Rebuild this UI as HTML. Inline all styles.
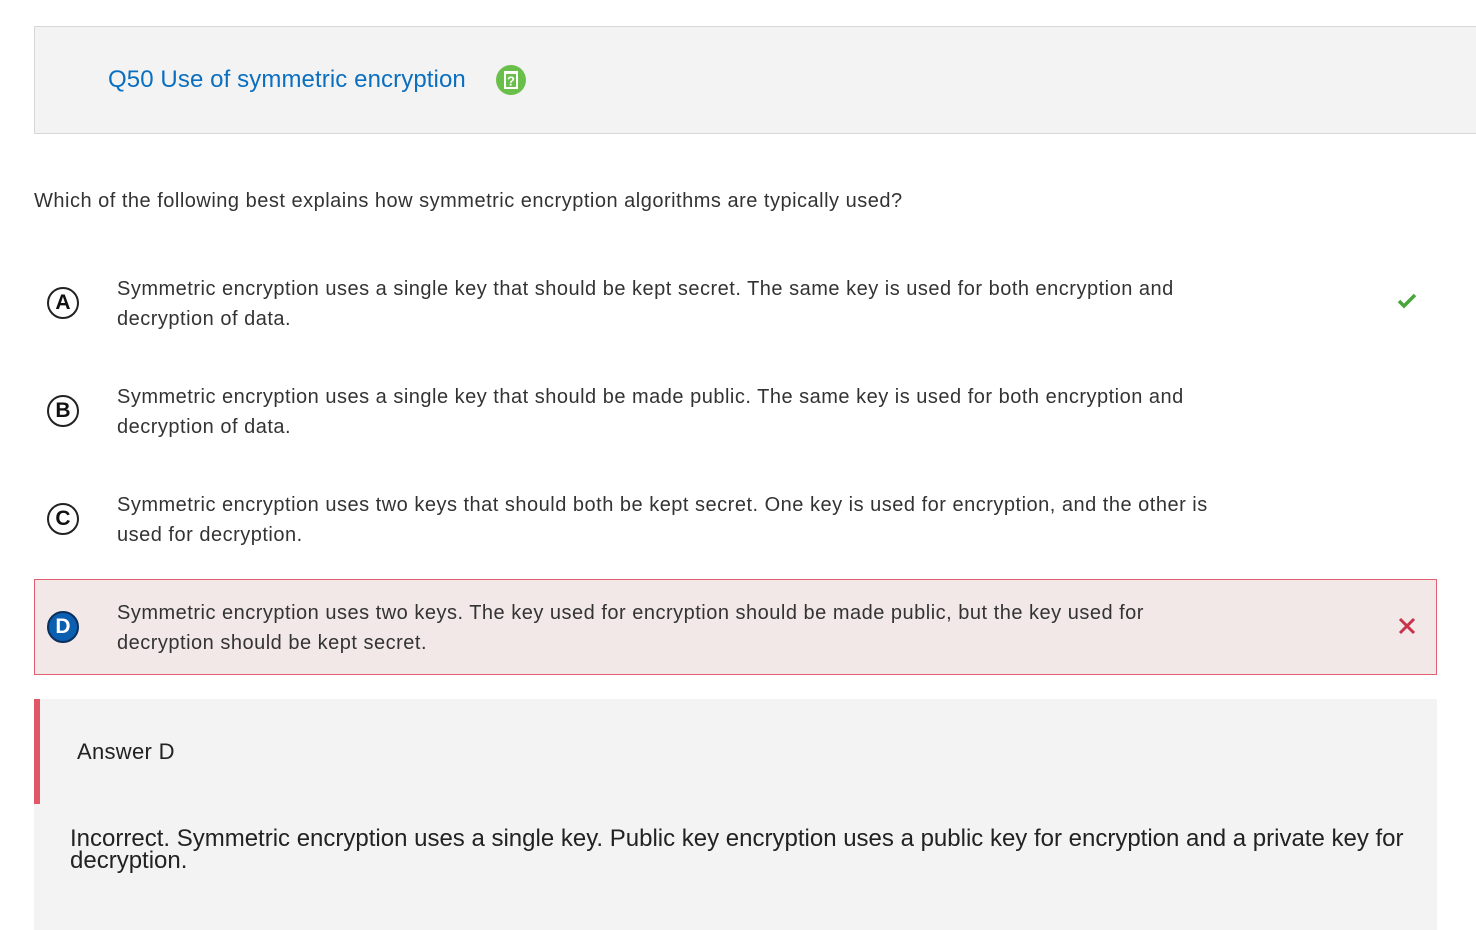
<!DOCTYPE html>
<html><head><meta charset="utf-8"><style>
body{margin:0;background:#fff;font-family:"Liberation Sans",Arial,sans-serif;color:#333;width:1476px;height:930px;overflow:hidden;position:relative}
.hdr{position:absolute;left:34px;top:26px;width:1460px;height:106px;background:#f3f3f3;border:1px solid #d6d6d6}
.title{position:absolute;left:73px;top:39px;font-size:24px;color:#0b6fc0;letter-spacing:0.1px}
.qi{position:absolute;left:461px;top:38px;width:30px;height:30px;border-radius:50%;background:#6abf4b}
.q{position:absolute;left:34px;top:190px;font-size:20px;letter-spacing:0.5px}
.opt{position:absolute;left:117px;font-size:20px;line-height:30px;width:1100px;letter-spacing:0.5px}
.c{position:absolute;left:47px;width:28px;height:28px;border:2px solid #222;border-radius:50%;font-weight:bold;font-size:21px;text-align:center;line-height:28px;color:#111}
.dbox{position:absolute;left:34px;top:579px;width:1401px;height:94px;background:#f2e8e8;border:1px solid #e0606f}
.ans{position:absolute;left:34px;top:699px;width:1403px;height:231px;background:#f3f3f3}
.bar{position:absolute;left:34px;top:699px;width:6px;height:105px;background:#e05767}
</style></head><body>
<div class="hdr"><div class="title">Q50 Use of symmetric encryption</div>
<div class="qi"><svg width="30" height="30" viewBox="0 0 30 30"><rect x="8" y="6" width="14" height="18" fill="#fff"/><rect x="10" y="9" width="10" height="13" fill="#6abf4b"/><text x="15" y="20.5" font-size="13" font-weight="bold" text-anchor="middle" fill="#fff" font-family="Liberation Sans">?</text></svg></div></div>
<div class="q">Which of the following best explains how symmetric encryption algorithms are typically used?</div>
<div class="c" style="top:287px">A</div>
<div class="opt" style="top:274px">Symmetric encryption uses a single key that should be kept secret. The same key is used for both encryption and decryption of data.</div>
<svg style="position:absolute;left:1397px;top:292px" width="20" height="18" viewBox="0 0 20 18"><path d="M2 9 L7 14 L18 3" stroke="#4aa63c" stroke-width="3.5" fill="none"/></svg>
<div class="c" style="top:395px">B</div>
<div class="opt" style="top:382px">Symmetric encryption uses a single key that should be made public. The same key is used for both encryption and decryption of data.</div>
<div class="c" style="top:503px">C</div>
<div class="opt" style="top:490px">Symmetric encryption uses two keys that should both be kept secret. One key is used for encryption, and the other is used for decryption.</div>
<div class="dbox"></div>
<div class="c" style="top:611px;background:#0b5fb0;color:#fff;border-color:#0a2f5c">D</div>
<div class="opt" style="top:598px">Symmetric encryption uses two keys. The key used for encryption should be made public, but the key used for decryption should be kept secret.</div>
<svg style="position:absolute;left:1398px;top:617px" width="18" height="18" viewBox="0 0 18 18"><path d="M2 2 L16 16 M16 2 L2 16" stroke="#c8334a" stroke-width="3" fill="none"/></svg>
<div class="ans"></div><div class="bar"></div>
<div style="position:absolute;left:77px;top:739px;font-size:22px;color:#222;letter-spacing:0.3px">Answer D</div>
<div style="position:absolute;left:70px;top:828px;font-size:24px;line-height:22px;width:1350px;color:#222">Incorrect. Symmetric encryption uses a single key. Public key encryption uses a public key for encryption and a private key for decryption.</div>
</body></html>
